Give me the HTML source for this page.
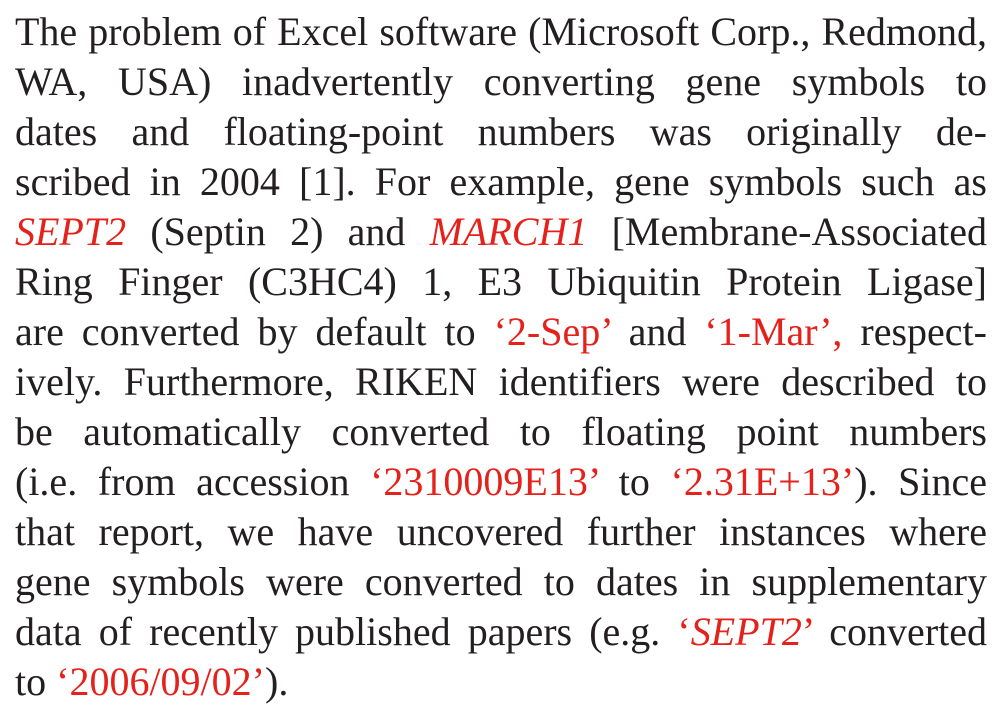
<!DOCTYPE html>
<html><head><meta charset="utf-8"><style>
html,body{margin:0;padding:0;background:#fff;width:1000px;height:710px;overflow:hidden}
.t{position:absolute;left:15px;top:7px;width:972px;font-family:"Liberation Serif",serif;font-size:40px;line-height:50px;color:#231f20}
.l{white-space:nowrap;text-align:justify;text-align-last:justify}
.n{text-align-last:left}
.r{color:#e4211b}
i{font-style:italic}
</style></head><body><div class="t">
<div class="l">The problem of Excel software (Microsoft Corp., Redmond,</div>
<div class="l">WA, USA) inadvertently converting gene symbols to</div>
<div class="l">dates and floating-point numbers was originally de-</div>
<div class="l">scribed in 2004 [1]. For example, gene symbols such as</div>
<div class="l"><i class="r">SEPT2</i> (Septin 2) and <i class="r">MARCH1</i> [Membrane-Associated</div>
<div class="l">Ring Finger (C3HC4) 1, E3 Ubiquitin Protein Ligase]</div>
<div class="l">are converted by default to <span class="r">‘2-Sep’</span> and <span class="r">‘1-Mar’,</span> respect-</div>
<div class="l">ively. Furthermore, RIKEN identifiers were described to</div>
<div class="l">be automatically converted to floating point numbers</div>
<div class="l">(i.e. from accession <span class="r">‘2310009E13’</span> to <span class="r">‘2.31E+13’</span>). Since</div>
<div class="l">that report, we have uncovered further instances where</div>
<div class="l">gene symbols were converted to dates in supplementary</div>
<div class="l">data of recently published papers (e.g. <span class="r">‘<i>SEPT2</i>’</span> converted</div>
<div class="l n">to <span class="r">‘2006/09/02’</span>).</div>
</div></body></html>
